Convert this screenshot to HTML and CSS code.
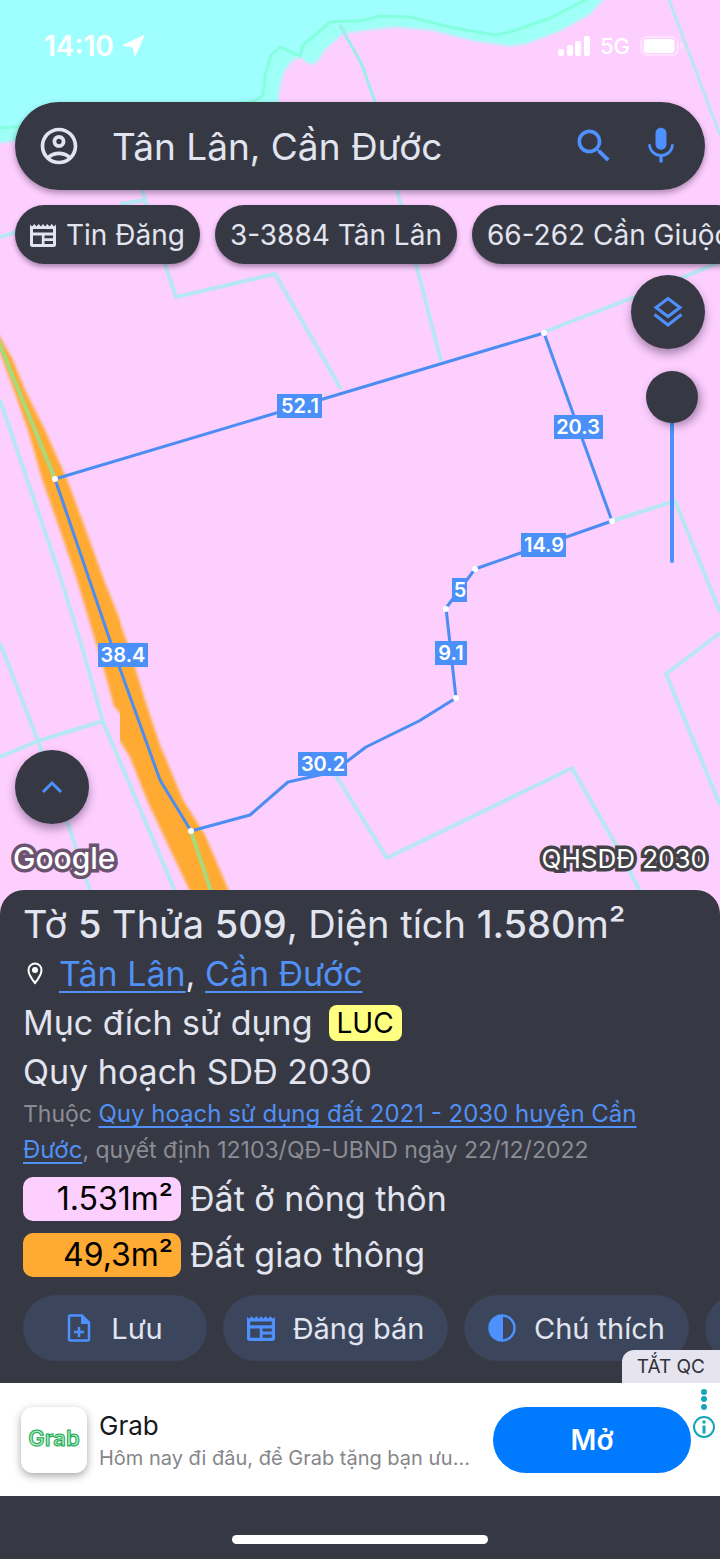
FILE: index.html
```
<!DOCTYPE html>
<html lang="vi">
<head>
<meta charset="utf-8">
<meta name="viewport" content="width=device-width, initial-scale=1">
<title>Tân Lân, Cần Đước</title>
<link rel="stylesheet" href="styles.css">
</head>
<body>
<svg class="sprite" aria-hidden="true">
  <symbol id="news" viewBox="0 0 26 24">
    <path fill="currentColor" d="M0 1.500 0 21.500Q0 24 2.500 24H23.500Q26 24 26 21.500V1.500L24 3.500 21.700 1 19.500 3.500 17.300 1 15.100 3.500 13 1 10.900 3.500 8.700 1 6.500 3.500 4.300 1 2 3.500ZM3 6H23V9.500H3ZM3 12.500H11.800V21H3ZM14.500 12.500H23V15.300H14.500ZM14.500 18H23V21H14.500Z" fill-rule="evenodd"/>
  </symbol>
</svg>

<main class="map">
  <svg class="map-canvas" viewBox="0 0 720 914" preserveAspectRatio="xMidYMin slice" aria-label="Bản đồ thửa đất">
    <defs>
      <filter id="soft" x="-5%" y="-5%" width="110%" height="110%"><feGaussianBlur stdDeviation="1.500"/></filter>
      <clipPath id="tile-west"><rect x="0" y="300" width="120" height="614"/></clipPath>
      <clipPath id="tile-east"><rect x="120" y="300" width="200" height="614"/></clipPath>
    </defs>
    <rect width="720" height="914" fill="#fdcfff"/>
    <path filter="url(#soft)" fill="#9dfff6" d="M-10 -10H610L603 0 590 14 560 31 525 44 510 46 475 41 430 30 395 27 360 31 342 34 325 50 316 63 309 64 300 57 292 61 284 72 280 86 277 110 100 130 0 143-10 144Z"/>
    <path fill="#9fffff" stroke="#84ffdd" stroke-width="3" stroke-linejoin="round" d="M-10 -10H590L585 0 550 18 510 32 495 35 450 27 410 17 380 16 360 21 345 21 330 22 303 45 300 56 280 47 271 55 265 75 263 95 255 101 100 120 0 128-10 129Z"/>
    <g clip-path="url(#tile-west)"><path filter="url(#soft)" fill="#ffaa33" d="M-4 330 12 358 25 390 45 430 68 482 84 525 104 580 124 630 160 745V760L114 706 107 680 95 640 77 580 60 530 42 479 28 430 12 385-4 342Z"/></g>
    <g clip-path="url(#tile-east)"><path filter="url(#soft)" fill="#ffaa33" d="M112 600 128 645 145 700 160 745 183 800 205 835 229 891 238 914H200L190 891 168 845 147 800 130 757 110 725Z"/></g>
    <g fill="none" stroke="#b7e7f2" stroke-width="4" stroke-linejoin="round">
      <path stroke="#9cecea" stroke-width="3" d="M340 25 362 65 375 102"/>
      <path d="M375 102 397 190 416 264 441 361"/>
      <path stroke-width="3" d="M669 0 720 135"/>
      <path d="M120 204 145 200 141 186M145 200 165 264 176 297 275 274 341 389M0 237 20 231"/>
      <path d="M544 332 632 298 720 262M612 521 675 501 720 612M720 633 666 674 720 805"/>
      <path d="M335 774 387 858 572 768 616 845 640 891"/>
      <path d="M0 400 58 570 80 640 103 722 175 891M0 757 38 741 103 721M0 643 38 741 70 830 90 891"/>
      <path stroke="#a8da7c" d="M-2 340 55 479M191 831 211 891"/>
    </g>
    <path fill="none" stroke="#4b8df2" stroke-width="3" stroke-linejoin="round" d="M55 479 544 333 612 521 475 569 446 608 456 698 419 721 366 747 333 772 288 782 250 815 191 831 160 780 115 655Z"/>
    <g fill="#fff">
      <circle cx="55" cy="479" r="3"/><circle cx="544" cy="333" r="3"/><circle cx="612" cy="521" r="3"/><circle cx="475" cy="569" r="3"/><circle cx="446" cy="609" r="3"/><circle cx="456" cy="698" r="3"/><circle cx="191" cy="831" r="3"/>
    </g>
    <g fill="#4b8ff8">
      <rect x="277" y="394" width="45" height="24"/><rect x="554" y="415" width="49" height="24"/><rect x="521" y="533" width="45" height="24"/><rect x="452" y="578" width="15" height="24"/><rect x="435" y="641" width="32" height="24"/><rect x="98" y="643" width="50" height="24"/><rect x="298" y="752" width="49" height="24"/>
    </g>
    <g class="edge-text">
      <text x="300" y="413">52.1</text><text x="578" y="434">20.3</text><text x="544" y="552">14.9</text><text x="460" y="597">5</text><text x="451" y="660">9.1</text><text x="123" y="662">38.4</text><text x="323" y="771">30.2</text>
    </g>
  </svg>

  <div class="map-ui">
    <div class="status">
      <div class="status-group">
        <span class="clock">14:10</span>
        <svg width="23" height="22" viewBox="0 0 23 22"><path d="M22 .500 13 21 11 12 1 10.500Z" fill="#fff" stroke="#fff" stroke-linejoin="round"/></svg>
      </div>
      <div class="status-group status-right">
        <svg width="32" height="20" viewBox="0 0 32 20" fill="#fff"><rect y="13" width="6" height="7" rx="2"/><rect x="9" y="9" width="6" height="11" rx="2"/><rect x="17" y="5" width="6" height="15" rx="2"/><rect x="26" width="6" height="20" rx="2"/></svg>
        <span class="network">5G</span>
        <svg width="44" height="20" viewBox="0 0 44 20"><rect x="1" y="1" width="37" height="18" rx="6" fill="none" stroke="#fff" stroke-opacity=".4" stroke-width="2"/><rect x="3.500" y="3" width="31" height="14" rx="4" fill="#fff"/><path d="M40.500 7Q43 8 43 10T40.500 13Z" fill="#fff" fill-opacity=".6"/></svg>
      </div>
    </div>

    <form class="search" role="search">
      <button class="icon-button account" type="button" aria-label="Tài khoản">
        <svg width="44" height="44" viewBox="0 0 24 24" fill="currentColor"><path d="M12 2C6.480 2 2 6.480 2 12s4.480 10 10 10 10-4.480 10-10S17.520 2 12 2zM7.350 18.500C8.660 17.560 10.260 17 12 17s3.340.560 4.650 1.500C15.340 19.440 13.740 20 12 20s-3.340-.560-4.650-1.500zm10.790-1.380C16.450 15.800 14.320 15 12 15s-4.450.800-6.140 2.120C4.700 15.730 4 13.950 4 12c0-4.420 3.580-8 8-8s8 3.580 8 8c0 1.950-.700 3.730-1.860 5.120z"/><path d="M12 6c-1.930 0-3.500 1.570-3.500 3.500S10.070 13 12 13s3.500-1.570 3.500-3.500S13.930 6 12 6zm0 5c-.830 0-1.500-.670-1.500-1.500S11.170 8 12 8s1.500.670 1.500 1.500S12.830 11 12 11z"/></svg>
      </button>
      <input class="search-input" type="text" aria-label="Tìm kiếm" value="Tân Lân, Cần Đước">
      <button class="icon-button" type="submit" aria-label="Tìm">
        <svg width="44" height="44" viewBox="0 0 24 24" fill="currentColor"><path d="M15.500 14h-.790l-.280-.270C15.410 12.590 16 11.110 16 9.500 16 5.910 13.090 3 9.500 3S3 5.910 3 9.500 5.910 16 9.500 16c1.610 0 3.090-.590 4.230-1.570l.270.280v.790l5 4.990L20.490 19l-4.990-5zm-6 0C7.010 14 5 11.990 5 9.500S7.010 5 9.500 5 14 7.010 14 9.500 11.990 14 9.500 14z"/></svg>
      </button>
      <button class="icon-button" type="button" aria-label="Giọng nói">
        <svg width="44" height="44" viewBox="0 0 24 24" fill="currentColor"><path d="M12 14c1.660 0 3-1.340 3-3V5c0-1.660-1.340-3-3-3S9 3.340 9 5v6c0 1.660 1.340 3 3 3zm5.500-3c0 3-2.500 5.300-5.500 5.300S6.500 14 6.500 11H5c0 3.600 2.700 6.400 6.100 6.920V21h1.800v-3.080C16.300 17.400 19 14.600 19 11z"/></svg>
      </button>
    </form>

    <div class="chips">
      <button class="chip" type="button"><svg width="26" height="24"><use href="#news"/></svg>Tin Đăng</button>
      <button class="chip" type="button">3-3884 Tân Lân</button>
      <button class="chip" type="button">66-262 Cần Giuộc</button>
    </div>

    <div class="tools">
      <button class="round-button" type="button" aria-label="Lớp bản đồ">
        <svg width="30" height="32" viewBox="0 0 30 32" fill="none" stroke="currentColor" stroke-width="3"><path d="M15 2.500 27 11.500 15 20.500 3 11.500ZM1.500 18.500 15 29 28.500 18.500"/></svg>
      </button>
      <input class="opacity" type="range" min="0" max="100" value="0" aria-label="Độ trong suốt">
    </div>

    <div class="map-foot">
      <button class="round-button" type="button" aria-label="Mở rộng">
        <svg width="22" height="14" viewBox="0 0 22 14" fill="none" stroke="currentColor" stroke-width="3"><path d="M2 12 11 3 20 12"/></svg>
      </button>
      <div class="credits"><span class="google">Google</span><span class="layer-name">QHSDĐ 2030</span></div>
    </div>
  </div>
</main>

<section class="sheet">
  <h1 class="title">Tờ <b>5</b> Thửa <b>509</b>, Diện tích <b>1.580</b>m²</h1>
  <p class="line place">
    <svg width="16" height="23" viewBox="0 0 16 23"><path d="M8 21Q1.500 13 1.500 8A6.500 6.500 0 0 1 14.500 8Q14.500 13 8 21Z" fill="none" stroke="#fff" stroke-width="2"/><circle cx="8" cy="8" r="3" fill="#fff"/></svg>
    <span><a href="#">Tân Lân</a>, <a href="#">Cần Đước</a></span>
  </p>
  <p class="line use">Mục đích sử dụng <span class="code">LUC</span></p>
  <p class="line">Quy hoạch SDĐ 2030</p>
  <p class="note">Thuộc <a href="#">Quy hoạch sử dụng đất 2021 - 2030 huyện Cần Đước</a>, quyết định 12103/QĐ-UBND ngày 22/12/2022</p>
  <ul class="areas">
    <li><span class="area rural">1.531m²</span>Đất ở nông thôn</li>
    <li><span class="area road">49,3m²</span>Đất giao thông</li>
  </ul>
  <div class="actions">
    <button class="action save" type="button"><svg width="24" height="28" viewBox="0 0 24 28"><path d="M3 1.500H15L22 8.500V25Q22 26.500 20.500 26.500H3.500Q2 26.500 2 25V2.500Q2 1.500 3 1.500ZM12 13V23M7 18H17" fill="none" stroke="currentColor" stroke-width="2.500"/><path d="M14 1V10H23Z" fill="currentColor"/></svg>Lưu</button>
    <button class="action sell" type="button"><svg width="28" height="26"><use href="#news"/></svg>Đăng bán</button>
    <button class="action legend" type="button"><svg width="28" height="28" viewBox="0 0 28 28"><circle cx="14" cy="14" r="12.500" fill="none" stroke="currentColor" stroke-width="2.500"/><path d="M15 1A13 13 0 1 0 15 27Z" fill="currentColor"/></svg>Chú thích</button>
    <button class="action more" type="button" aria-label="Thêm"></button>
  </div>
</section>

<aside class="ad">
  <button class="ad-off" type="button">TẮT QC</button>
  <div class="ad-icon"><svg width="58" height="30" viewBox="0 0 58 30"><text class="ad-logo" x="29" y="21">Grab</text></svg></div>
  <div class="ad-copy"><div class="ad-title">Grab</div><div class="ad-text">Hôm nay đi đâu, để Grab tặng bạn ưu...</div></div>
  <button class="ad-open" type="button">Mở</button>
  <svg class="ad-info" width="24" height="52" viewBox="0 0 24 52"><g fill="#16a5b8"><circle cx="12" cy="5" r="3"/><circle cx="12" cy="12" r="3"/><circle cx="12" cy="20" r="3"/><circle cx="12" cy="35" r="1.800"/><rect x="10.500" y="38.500" width="3" height="8"/></g><circle cx="12" cy="40" r="10" fill="none" stroke="#16a5b8" stroke-width="2"/></svg>
</aside>

<footer class="home"><div class="home-bar"></div></footer>
</body>
</html>
```
FILE: styles.css
```
* { box-sizing: border-box; }
body {
  margin: 0;
  min-height: 100vh;
  display: flex;
  flex-direction: column;
  overflow-x: hidden;
  background: #363943;
  color: #e2e4ef;
  font-family: Inter, Roboto, "Liberation Sans", sans-serif;
}
button, input { font: inherit; color: inherit; border: 0; margin: 0; padding: 0; background: none; }
button { flex: none; }
svg { display: block; flex: none; }
p, h1, ul { margin: 0; padding: 0; }
a { color: #5190f5; text-decoration-thickness: 2px; text-underline-offset: 5px; text-decoration-skip-ink: none; }
.sprite { position: absolute; width: 0; height: 0; }

.map { position: relative; flex: 1; display: flex; overflow: hidden; }
.map-canvas { position: absolute; inset: 0; width: 100%; height: 100%; }
.edge-text { fill: #fff; font-size: 20px; font-weight: 600; text-anchor: middle; }
.map-ui { position: relative; flex: 1; min-width: 0; display: flex; flex-direction: column; padding-bottom: 36px; }

.status { display: flex; justify-content: space-between; align-items: center; height: 92px; padding: 0 36px 0 44px; color: #fff; }
.status-group { display: flex; align-items: center; gap: 8px; }
.status-right { gap: 10px; }
.clock { font-size: 28px; font-weight: 600; }
.network { font-size: 22px; font-weight: 500; }

.search {
  display: flex; align-items: center;
  height: 88px; margin: 10px 15px 0; padding: 0 22px;
  border-radius: 44px; background: #363943;
  box-shadow: 0 3px 6px rgba(40, 20, 50, .4);
}
.icon-button { width: 44px; height: 44px; color: #4d90fe; }
.icon-button + .icon-button { margin-left: 23px; }
.icon-button.account { color: #e2e4ef; }
.search-input { flex: 1; min-width: 0; height: 60px; padding: 0 16px 0 31px; font-size: 37px; outline: 0; }

.chips { display: flex; gap: 15px; padding: 15px 0 11px 15px; overflow: hidden; }
.chip {
  display: flex; align-items: center; gap: 10px; height: 59px; padding: 0 15px;
  border-radius: 30px; background: #363943; font-size: 28px; white-space: nowrap;
  box-shadow: 0 3px 5px rgba(40, 20, 50, .4);
}

.tools { display: flex; flex-direction: column; align-items: flex-end; gap: 22px; padding-right: 15px; }
.round-button {
  display: grid; place-items: center; width: 74px; height: 74px;
  border-radius: 50%; background: #363943; color: #4d90fe;
  box-shadow: 0 5px 10px rgba(40, 20, 50, .4);
}
.opacity {
  appearance: none; writing-mode: vertical-lr;
  width: 52px; height: 192px; margin-right: 7px;
}
.opacity::-webkit-slider-runnable-track { width: 4px; height: 100%; border-radius: 2px; background: #4d90fe; }
.opacity::-webkit-slider-thumb {
  appearance: none; width: 52px; height: 52px; margin-left: -24px;
  border-radius: 50%; background: #363943; box-shadow: 3px 3px 8px rgba(40, 20, 50, .4);
}

.map-foot { margin-top: auto; padding: 0 15px; }
.credits { display: flex; justify-content: space-between; align-items: center; height: 40px; margin: 14px -2px 0; }
.google, .layer-name { color: #fff; paint-order: stroke fill; -webkit-text-stroke: 7px #6a536f; }
.google { font-size: 30px; font-weight: 500; }
.layer-name { font-size: 26px; font-weight: 400; -webkit-text-stroke-color: #434246; }

.sheet {
  position: relative; margin-top: -24px; padding: 10px 0 22px 23px; overflow: hidden;
  border-radius: 24px 24px 0 0; background: #363943;
}
.title { font-size: 38px; line-height: 49px; font-weight: 400; white-space: nowrap; }
.title b { font-weight: 500; }
.line { font-size: 34px; line-height: 49px; }
.place { display: flex; align-items: center; gap: 16px; padding-left: 4px; }
.use { display: flex; align-items: center; gap: 16px; }
.code { padding: 0 8px; border-radius: 8px; background: #ffff80; color: #000; font-size: 28px; line-height: 36px; }
.note { padding-right: 48px; color: #8c8d94; font-size: 23px; line-height: 36px; }
.note a { font-size: 24px; text-underline-offset: 4px; }
.areas { list-style: none; display: grid; gap: 12px; margin-top: 9px; }
.areas li { display: flex; align-items: center; gap: 9px; font-size: 34px; line-height: 44px; }
.area { width: 158px; padding-right: 8px; border-radius: 10px; text-align: right; color: #000; font-size: 32px; }
.rural { background: #fdcfff; }
.road { background: #ffaa33; }
.actions { display: flex; gap: 16px; margin-top: 18px; }
.action {
  display: flex; align-items: center; justify-content: center; gap: 18px;
  width: 225px; height: 66px; border-radius: 33px; background: #3b465d;
  font-size: 29px;
}
.action svg { color: #4d90fe; }
.save { width: 184px; gap: 20px; }

.ad { position: relative; display: flex; align-items: center; height: 113px; padding: 0 4px 0 21px; background: #fff; color: #16181d; }
.ad-off {
  position: absolute; right: 0; bottom: 100%; height: 33px; padding: 0 15px;
  border-radius: 12px 0 0 0; background: #e5e4ef; color: #30323a; font-size: 19px;
}
.ad-icon { display: grid; place-items: center; flex: none; width: 66px; height: 66px; border-radius: 12px; background: #fff; box-shadow: 0 3px 8px rgba(0, 0, 0, .35); }
.ad-logo { font: 600 22px Inter, sans-serif; text-anchor: middle; fill: #a9e8c0; stroke: #18a94f; stroke-width: 1; }
.ad-copy { flex: 1; min-width: 0; margin: 0 12px; padding-top: 5px; }
.ad-title { font-size: 26px; line-height: 32px; }
.ad-text { font-size: 20px; line-height: 32px; color: #85868a; white-space: nowrap; }
.ad-open { width: 198px; height: 66px; margin-right: 1px; border-radius: 33px; background: #007aff; color: #fff; font-size: 28px; font-weight: 600; }
.ad-info { align-self: flex-start; margin-top: 4px; }

.home { display: grid; justify-items: center; align-items: end; height: 63px; padding-bottom: 15px; }
.home-bar { width: 256px; height: 9px; border-radius: 5px; background: #fff; }
```
